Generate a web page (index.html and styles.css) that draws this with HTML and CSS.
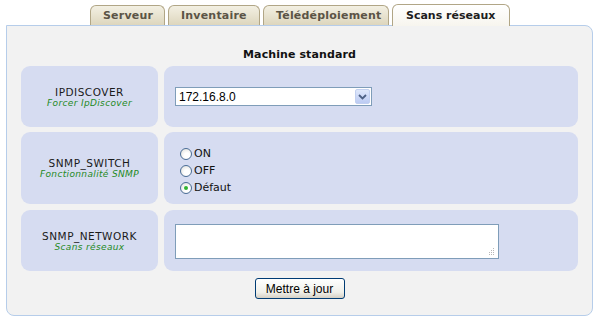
FILE: index.html
```html
<!DOCTYPE html>
<html>
<head>
<meta charset="utf-8">
<link rel="stylesheet" href="styles.css">
</head>
<body>
<div class="tabs">
  <div class="tab">Serveur</div>
  <div class="tab">Inventaire</div>
  <div class="tab">Télédéploiement</div>
  <div class="tab active">Scans réseaux</div>
</div>
<div class="panel">
  <div class="title">Machine standard</div>
  <div class="grid">
    <div class="label r1"><div class="name">IPDISCOVER</div><div class="sub">Forcer IpDiscover</div></div>
    <div class="field r1">
      <div class="select"><span>172.16.8.0</span><span class="arrow"><svg width="9" height="6" viewBox="0 0 9 6"><path d="M1 1 L4.5 4.5 L8 1" fill="none" stroke="#4d6185" stroke-width="1.8"/></svg></span></div>
    </div>
    <div class="label r2"><div class="name">SNMP_SWITCH</div><div class="sub">Fonctionnalité SNMP</div></div>
    <div class="field r2 radios">
      <label class="radio"><span class="dot"></span>ON</label>
      <label class="radio"><span class="dot"></span>OFF</label>
      <label class="radio"><span class="dot on"></span>Défaut</label>
    </div>
    <div class="label r3"><div class="name">SNMP_NETWORK</div><div class="sub">Scans réseaux</div></div>
    <div class="field r3">
      <div class="textarea"><svg class="grip" width="7" height="7" viewBox="0 0 7 7"><g fill="#b8b8b8"><rect x="5" y="0" width="1" height="1"/><rect x="3" y="2" width="1" height="1"/><rect x="5" y="2" width="1" height="1"/><rect x="1" y="4" width="1" height="1"/><rect x="3" y="4" width="1" height="1"/><rect x="5" y="4" width="1" height="1"/><rect x="1" y="6" width="1" height="1"/><rect x="3" y="6" width="1" height="1"/><rect x="5" y="6" width="1" height="1"/></g></svg></div>
    </div>
  </div>
  <div class="actions"><button class="btn">Mettre à jour</button></div>
</div>
</body>
</html>
```

FILE: styles.css
```css
html, body { margin: 0; padding: 0; background: #ffffff; }
body { width: 600px; height: 320px; position: relative; font-family: "DejaVu Sans", Verdana, sans-serif; }

.tabs {
  display: flex;
  gap: 3px;
  padding-left: 90px;
  height: 26px;
  align-items: flex-end;
  position: relative;
  z-index: 2;
}
.tab {
  height: 20px;
  box-sizing: border-box;
  border: 1px solid #b1a686;
  border-bottom: none;
  border-radius: 6px 6px 0 0;
  background: linear-gradient(#f3f0e3, #ddd6bd);
  color: #5b5446;
  font-weight: bold;
  font-size: 11px;
  line-height: 19px;
  padding: 0 12px;
  margin-bottom: 1px;
  letter-spacing: 0.2px;
}
.tab:nth-child(1) { width: 75px; }
.tab:nth-child(2) { width: 92px; }
.tab:nth-child(3) { width: 126px; }
.tab.active {
  width: 118px;
  height: 22px;
  margin-bottom: 0;
  background: linear-gradient(#ffffff, #f7f5ee);
  color: #1e1e1e;
  line-height: 21px;
  padding: 0 0 0 13px;
  letter-spacing: 0;
}

.panel {
  position: relative;
  z-index: 1;
  margin: -1px 7px 0 6px;
  height: 291px;
  box-sizing: border-box;
  background: #f2f2f2;
  border: 1px solid #b6cdea;
  border-radius: 0 8px 8px 8px;
  padding: 0 14px;
}
.title {
  text-align: center;
  font-weight: bold;
  font-size: 11px;
  color: #111;
  padding-top: 22px;
  height: 18px;
  line-height: 14px;
  letter-spacing: 0.1px;
}
.grid {
  display: grid;
  grid-template-columns: 137px 414px;
  column-gap: 6px;
  row-gap: 5px;
}
.label, .field {
  background: #d6dcf1;
  border-radius: 9px;
}
.r1 { height: 61px; }
.r2 { height: 72px; }
.r3 { height: 61px; margin-top: 1px; }
.label {
  display: flex;
  flex-direction: column;
  justify-content: center;
  align-items: center;
  padding-top: 1px;
  box-sizing: border-box;
}
.name { font-size: 10.5px; color: #1a1a1a; line-height: 12px; letter-spacing: 0.5px; }
.sub { font-size: 9px; font-style: italic; color: #1f8a1f; line-height: 11px; letter-spacing: 0.35px; }

.field { display: flex; align-items: center; padding-left: 11px; }
.select {
  width: 197px;
  height: 19px;
  box-sizing: border-box;
  border: 1px solid #7f9db9;
  background: #fff;
  display: flex;
  align-items: center;
  justify-content: space-between;
  font-family: "Liberation Sans", Arial, sans-serif;
  font-size: 12px;
  color: #000;
  padding-left: 3px;
}
.arrow {
  width: 15px;
  height: 15px;
  margin-right: 1px;
  background: linear-gradient(#dfe8fb, #bccbf3);
  border: 1px solid #c2d0f0;
  box-sizing: border-box;
  display: flex;
  align-items: center;
  justify-content: center;
  border-radius: 2px;
}

.radios { flex-direction: column; align-items: flex-start; justify-content: center; padding-left: 16px; padding-top: 6px; box-sizing: border-box; gap: 3px; }
.radio {
  display: flex;
  align-items: center;
  font-size: 11px;
  color: #111;
  line-height: 14px;
  gap: 1px;
}
.dot {
  width: 12px;
  height: 12px;
  border-radius: 50%;
  border: 1px solid #4a6d96;
  background: radial-gradient(circle at 60% 65%, #ffffff 30%, #dcdcd6 100%);
  box-sizing: border-box;
  position: relative;
  margin-right: 1px;
}
.dot.on::after {
  content: "";
  position: absolute;
  left: 3px; top: 3px;
  width: 4px; height: 4px;
  border-radius: 50%;
  background: #31b331;
}

.textarea {
  width: 324px;
  height: 35px;
  box-sizing: border-box;
  border: 1px solid #7f9db9;
  background: #fff;
  position: relative;
  margin-top: 1px;
}
.grip { position: absolute; right: 3px; bottom: 3px; }

.actions { display: flex; justify-content: center; padding-top: 7px; }
.btn {
  width: 90px;
  height: 21px;
  padding: 0;
  border: 1px solid #003c74;
  border-radius: 3px;
  background: linear-gradient(#ffffff, #f0f0ea 70%, #d6d0c5);
  font-family: "Liberation Sans", Arial, sans-serif;
  font-size: 12px;
  color: #000;
}
```
